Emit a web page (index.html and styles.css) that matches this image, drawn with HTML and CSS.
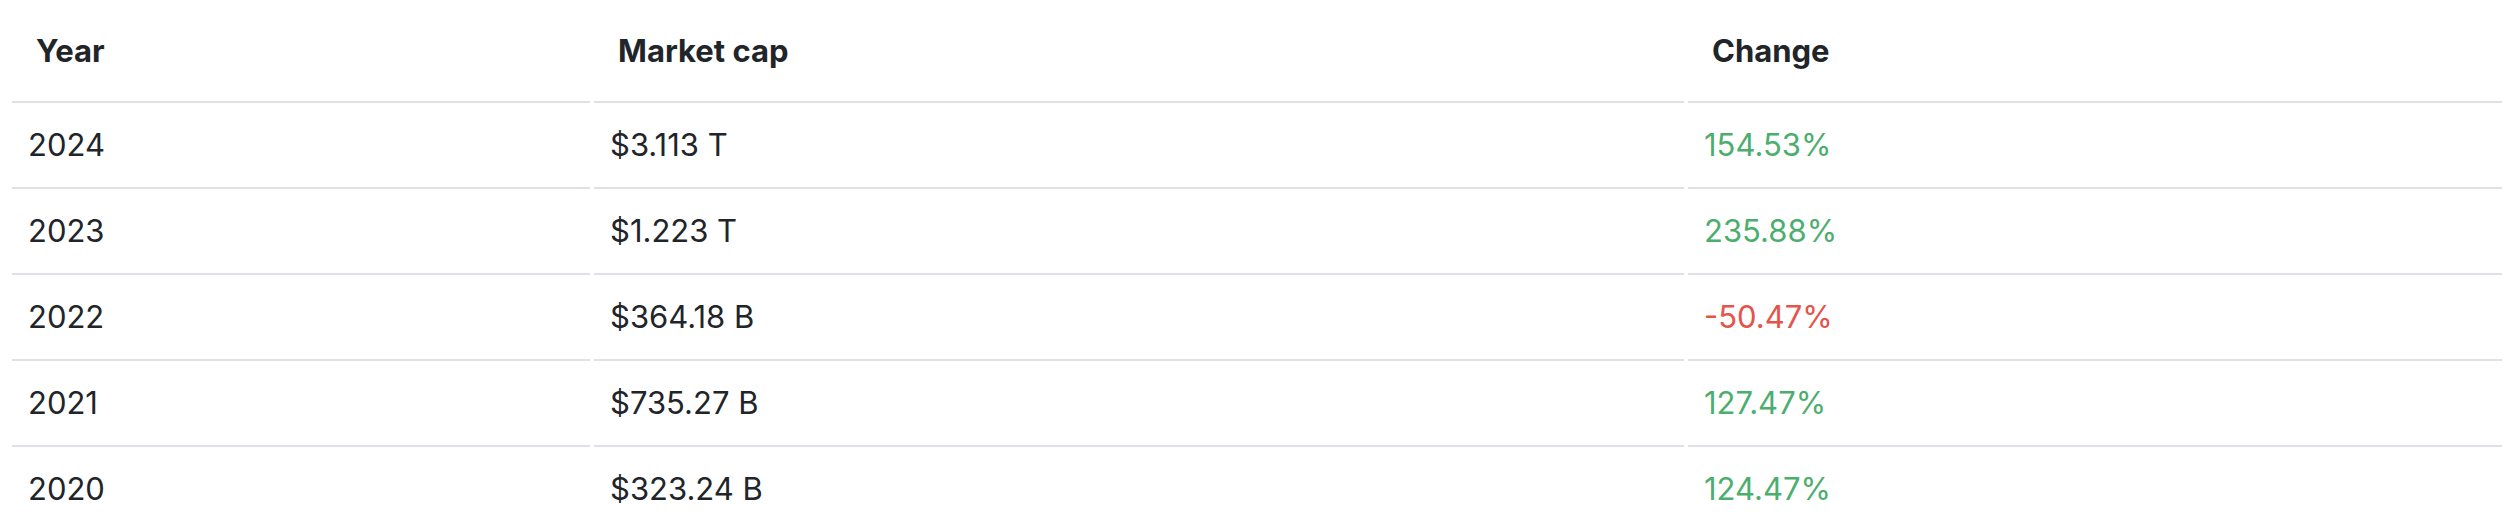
FILE: index.html
```html
<!DOCTYPE html>
<html lang="en">
<head>
<meta charset="utf-8">
<title>Market cap history</title>
<link rel="stylesheet" href="styles.css">
</head>
<body>
<table class="cap-table">
  <colgroup>
    <col class="col-year">
    <col class="col-cap">
    <col class="col-change">
  </colgroup>
  <thead>
    <tr>
      <th>Year</th>
      <th>Market cap</th>
      <th>Change</th>
    </tr>
  </thead>
  <tbody>
    <tr>
      <td>2024</td>
      <td>$3.113 T</td>
      <td class="up">154.53%</td>
    </tr>
    <tr>
      <td>2023</td>
      <td>$1.223 T</td>
      <td class="up">235.88%</td>
    </tr>
    <tr>
      <td>2022</td>
      <td>$364.18 B</td>
      <td class="down">-50.47%</td>
    </tr>
    <tr>
      <td>2021</td>
      <td>$735.27 B</td>
      <td class="up">127.47%</td>
    </tr>
    <tr>
      <td>2020</td>
      <td>$323.24 B</td>
      <td class="up">124.47%</td>
    </tr>
  </tbody>
</table>
</body>
</html>
```

FILE: styles.css
```css
html {
  overflow: hidden;
  background: #ffffff;
}

body {
  margin: 0 8px;
  font-family: Inter, "Noto Sans", "Liberation Sans", sans-serif;
  color: #212529;
}

.cap-table {
  border-collapse: separate;
  border-spacing: 4px 0;
  table-layout: fixed;
  width: calc(100% + 12px);
}

.col-year { width: 578px; }
.col-cap { width: 1090px; }

.cap-table th,
.cap-table td {
  text-align: left;
  border-bottom: 2px solid #dee2e6;
  white-space: nowrap;
}

.cap-table th {
  height: 101px;
  padding: 0 0 0 24px;
  font-size: 31px;
  font-weight: 700;
  vertical-align: middle;
}

.cap-table td {
  height: 82px;
  padding: 0 0 2px 16px;
  font-size: 31px;
  font-weight: 400;
  vertical-align: middle;
}

.cap-table tbody tr:last-child td {
  border-bottom: none;
}

.up { color: #4cae6e; }
.down { color: #e5544b; }
```
